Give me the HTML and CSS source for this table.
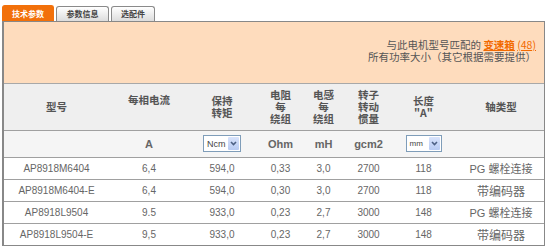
FILE: index.html
```html
<!DOCTYPE html>
<html lang="zh">
<head>
<meta charset="utf-8">
<link rel="stylesheet" href="styles.css">
</head>
<body>
<div class="wrap">
  <div class="tabs">
    <div class="tab active">技术参数</div>
    <div class="tab t2">参数信息</div>
    <div class="tab t3">选配件</div>
  </div>
  <div class="panel">
    <div class="info">
      <div>与此电机型号匹配的 <a class="link strong">变速箱</a> <a class="link">(48)</a></div>
      <div>所有功率大小（其它根据需要提供）</div>
    </div>
    <table class="grid">
      <colgroup>
        <col class="c1"><col class="c2"><col class="c3"><col class="c4"><col class="c5"><col class="c6"><col class="c7"><col class="c8">
      </colgroup>
      <tr class="head">
        <th>型号</th>
        <th class="top">每相电流</th>
        <th>保持<br>转矩</th>
        <th>电阻<br>每<br>绕组</th>
        <th>电感<br>每<br>绕组</th>
        <th>转子<br>转动<br>惯量</th>
        <th>长度<br>"A"</th>
        <th class="last">轴类型</th>
      </tr>
      <tr class="units">
        <td></td>
        <td>A</td>
        <td><span class="sel"><span class="val">Ncm</span><span class="btn"><svg width="7" height="5" viewBox="0 0 7 5"><path d="M1 1 L3.5 3.5 L6 1" fill="none" stroke="#4d6185" stroke-width="1.6"/></svg></span></span></td>
        <td>Ohm</td>
        <td>mH</td>
        <td>gcm2</td>
        <td><span class="sel sm"><span class="val">mm</span><span class="btn"><svg width="7" height="5" viewBox="0 0 7 5"><path d="M1 1 L3.5 3.5 L6 1" fill="none" stroke="#4d6185" stroke-width="1.6"/></svg></span></span></td>
        <td></td>
      </tr>
      <tr class="row"><td>AP8918M6404</td><td>6,4</td><td>594,0</td><td>0,33</td><td>3,0</td><td>2700</td><td>118</td><td class="last">PG 螺栓连接</td></tr>
      <tr class="row"><td>AP8918M6404-E</td><td>6,4</td><td>594,0</td><td>0,30</td><td>3,0</td><td>2700</td><td>118</td><td class="last cjk">带编码器</td></tr>
      <tr class="row"><td>AP8918L9504</td><td>9.5</td><td>933,0</td><td>0,23</td><td>2,7</td><td>3000</td><td>148</td><td class="last">PG 螺栓连接</td></tr>
      <tr class="row end"><td>AP8918L9504-E</td><td>9,5</td><td>933,0</td><td>0,23</td><td>2,7</td><td>3000</td><td>148</td><td class="last cjk">带编码器</td></tr>
    </table>
  </div>
</div>
</body>
</html>
```

FILE: styles.css
```css
html, body {
  margin: 0;
  padding: 0;
  background: #ffffff;
}
body {
  font-family: "Liberation Sans", Arial, "Noto Sans CJK SC", sans-serif;
  color: #666666;
}
.wrap {
  padding: 5px 0 0 2px;
  width: 543px;
}
.tabs {
  display: flex;
  align-items: flex-end;
  gap: 2px;
  height: 16px;
}
.tab {
  box-sizing: border-box;
  height: 15px;
  width: 53px;
  border: 1px solid #8a8a8a;
  border-bottom: none;
  border-radius: 3px 3px 0 0;
  background: linear-gradient(#ffffff, #dcdcdc);
  font-family: "Noto Sans CJK SC", sans-serif;
  font-size: 8px;
  font-weight: bold;
  line-height: 13px;
  text-align: center;
  color: #444444;
}
.tab.active {
  height: 16px;
  width: 52px;
  background: #f2700a;
  border-color: #f2700a;
  color: #ffffff;
  line-height: 15px;
}
.tab.t3 {
  width: 44px;
}
.panel {
  border: 1px solid #888888;
  border-left-width: 2px;
  background: #ffffff;
}
.info {
  background: #fedcbd;
  height: 62px;
  box-sizing: border-box;
  padding: 17px 8px 0 0;
  text-align: right;
  font-family: "Noto Sans CJK SC", sans-serif;
  font-size: 10.5px;
  line-height: 12px;
  color: #555555;
  border-bottom: 1px solid #a8a8a8;
}
.link {
  color: #f26a00;
  text-decoration: underline;
}
.link.strong {
  font-weight: bold;
}
.grid {
  width: 100%;
  border-collapse: collapse;
  table-layout: fixed;
}
.c1 { width: 105px; }
.c2 { width: 80px; }
.c3 { width: 66px; }
.c4 { width: 51px; }
.c5 { width: 35px; }
.c6 { width: 55px; }
.c7 { width: 55px; }
.c8 { width: auto; }
.grid th, .grid td {
  padding: 0;
  text-align: center;
  vertical-align: middle;
}
.head {
  background: #efefef;
  height: 46px;
  border-bottom: 1px solid #a0a0a0;
}
.head th {
  font-family: "Noto Sans CJK SC", sans-serif;
  font-size: 10.5px;
  line-height: 12px;
  font-weight: bold;
  color: #555555;
}
.head th.top {
  vertical-align: top;
  padding-top: 10px;
}
.grid .last {
  padding-left: 7px;
}
.units {
  background: #f5f5f5;
  height: 27px;
  border-bottom: 1px solid #a0a0a0;
}
.units td {
  font-size: 11px;
  font-weight: bold;
  color: #666666;
}
.sel {
  display: inline-flex;
  align-items: center;
  box-sizing: border-box;
  height: 17px;
  width: 38px;
  border: 1px solid #7f9db9;
  background: #ffffff;
  vertical-align: middle;
}
.sel.sm {
  width: 36px;
}
.val {
  flex: 1;
  text-align: left;
  padding-left: 3px;
  font-size: 9px;
  font-weight: normal;
  color: #444444;
}
.sel.sm .val {
  font-size: 8px;
  padding-left: 3px;
}
.btn {
  display: flex;
  align-items: center;
  justify-content: center;
  width: 11px;
  height: 13px;
  margin-right: 1px;
  border-radius: 1px;
  background: linear-gradient(#d8e3fb, #b8cbf3);
}
.row {
  height: 22px;
  border-bottom: 1px solid #a0a0a0;
}
.row.end {
  border-bottom: none;
}
.row td {
  font-size: 10px;
  color: #666666;
}
.row td.last {
  font-family: "Liberation Sans", Arial, "Noto Sans CJK SC", sans-serif;
  font-size: 11px;
}
.row td.cjk {
  font-size: 12px;
}
```
